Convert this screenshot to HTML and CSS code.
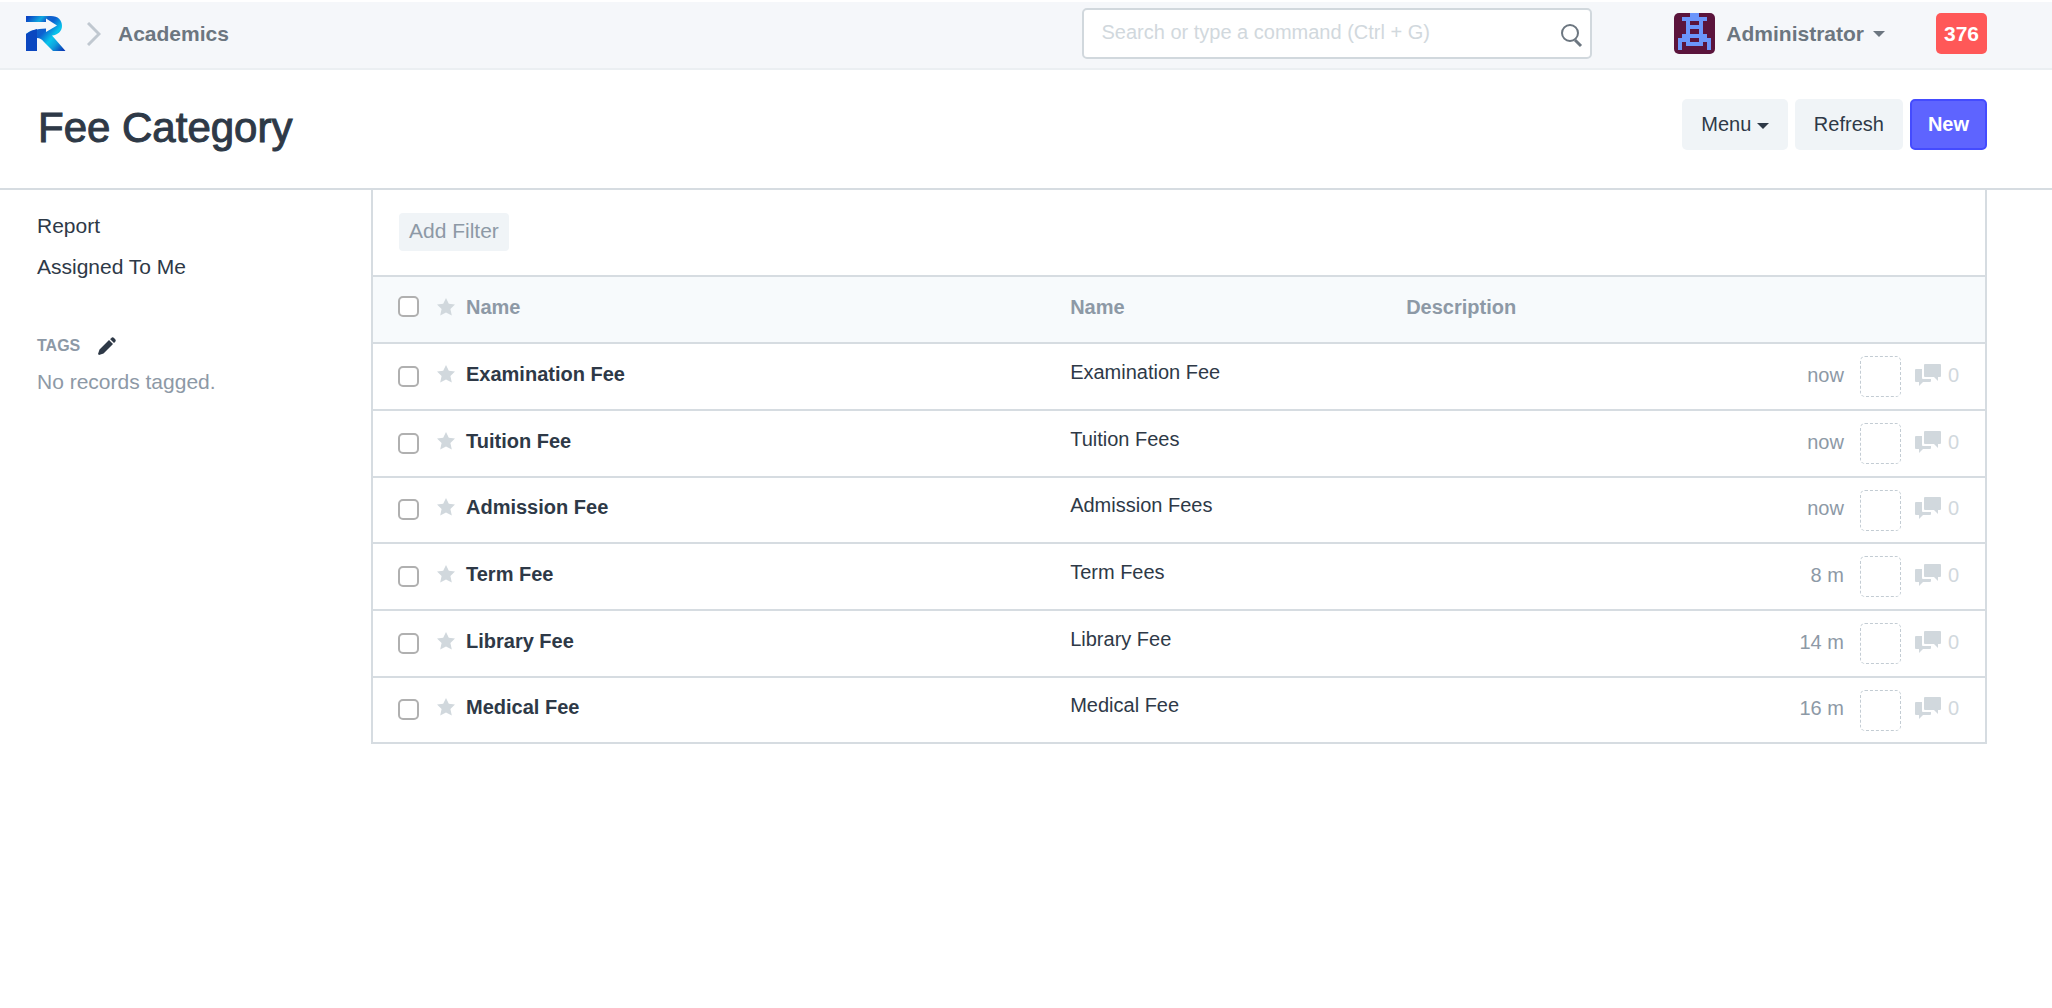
FILE: index.html
```html
<!DOCTYPE html>
<html lang="en">
<head>
<meta charset="utf-8">
<title>Fee Category</title>
<link rel="stylesheet" href="styles.css">
</head>
<body>
<svg class="sprite" aria-hidden="true">
  <symbol id="star" viewBox="0 0 18 18"><path d="M9 0l2.800 5.800 6.200.8-4.600 4.400 1.400 6.600L9 14.400l-5.800 3.200L4.600 11 0 6.600l6.200-.8z"/></symbol>
  <symbol id="chat" viewBox="0 0 26 22"><path d="M10 0h15q1 0 1 1v11q0 1-1 1h-2v4l-4-4h-9q-1 0-1-1V1q0-1 1-1z"/><path d="M1 5h6v9q0 1 1 1h8v2q0 1-1 1H8l-4 4v-4H1q-1 0-1-1V6q0-1 1-1z"/></symbol>
</svg>
<header class="navbar">
  <nav class="crumbs">
    <a href="#" aria-label="Home">
      <svg class="logo" viewBox="0 0 40 35">
        <defs><linearGradient id="blue" gradientUnits="userSpaceOnUse" x1="0" y1="4" x2="36" y2="35">
          <stop offset="0" stop-color="#0b45c4"/><stop offset=".22" stop-color="#0fa9e0"/><stop offset=".32" stop-color="#1262cc"/><stop offset=".44" stop-color="#0d5fd0"/><stop offset=".66" stop-color="#08c6ec"/><stop offset=".8" stop-color="#10a0dd"/><stop offset="1" stop-color="#0a3fb8"/>
        </linearGradient></defs>
        <path fill="url(#blue)" d="M0 0h25c7 0 11 4 11 10 0 5-4 9-10 9.500L39.500 35H27L18 26q-3-4-7-4V35H0V18q5-5 20-5.500v3.500l11-6.500L20 2.500V6H0z"/>
        <path fill="#0b47c0" d="M0 18q5-4 11-5v22H0z"/>
      </svg>
    </a>
    <svg class="chevron" viewBox="0 0 14 24"><path d="M1 1l11 11L1 23"/></svg>
    <a href="#">Academics</a>
  </nav>
  <div class="search">
    <input type="text" aria-label="Search" placeholder="Search or type a command (Ctrl + G)">
    <svg viewBox="0 0 22 24"><circle cx="9" cy="9" r="8"/><path class="handle" d="M14 16l6 6"/></svg>
  </div>
  <button class="user">
    <svg class="avatar" viewBox="0 0 10 10" shape-rendering="crispEdges"><path fill="#5b143c" d="M0 0h10v10H0z"/><path fill="#6b95fb" d="M4 0h2v1H4zM2 1h6v1H2zM3 2h1v4H3zM6 2h1v4H6zM4 3h2v1H4zM2 5h6v1H2zM1 6h3v1H1zM6 6h3v1H6zM1 7h1v2H1zM8 7h1v2H8zM3 7h4v1H3z"/></svg>
    Administrator <span class="caret"></span>
  </button>
  <button class="count">376</button>
</header>
<div class="head">
  <h1>Fee Category</h1>
  <div class="actions">
    <button class="btn">Menu <span class="caret"></span></button>
    <button class="btn">Refresh</button>
    <button class="btn primary">New</button>
  </div>
</div>
<div class="body">
  <aside class="side">
    <a href="#">Report</a>
    <a href="#">Assigned To Me</a>
    <div class="tags">TAGS
      <svg viewBox="0 0 18 18"><path d="M13 1.500Q14.500-.5 16 1l1 1q1.500 1.500 0 3l-1 1-4-4zM11 3l4 4-9.500 9.500L1 18l-1-1 1.500-4.500z"/></svg>
    </div>
    <p>No records tagged.</p>
  </aside>
  <main class="list">
    <div class="filters"><button>Add Filter</button></div>
    <table>
      <colgroup><col class="c-title"><col class="c-name"><col class="c-desc"><col></colgroup>
      <thead>
        <tr><th><div class="subject"><input type="checkbox" aria-label="Select all"><svg><use href="#star"/></svg>Name</div></th><th>Name</th><th>Description</th><th></th></tr>
      </thead>
      <tbody>
        <tr><td><div class="subject"><input type="checkbox" aria-label="Select Examination Fee"><svg><use href="#star"/></svg><a href="#">Examination Fee</a></div></td><td>Examination Fee</td><td></td><td><div class="meta">now<span class="assign"></span><svg><use href="#chat"/></svg><span class="zero">0</span></div></td></tr>
        <tr><td><div class="subject"><input type="checkbox" aria-label="Select Tuition Fee"><svg><use href="#star"/></svg><a href="#">Tuition Fee</a></div></td><td>Tuition Fees</td><td></td><td><div class="meta">now<span class="assign"></span><svg><use href="#chat"/></svg><span class="zero">0</span></div></td></tr>
        <tr><td><div class="subject"><input type="checkbox" aria-label="Select Admission Fee"><svg><use href="#star"/></svg><a href="#">Admission Fee</a></div></td><td>Admission Fees</td><td></td><td><div class="meta">now<span class="assign"></span><svg><use href="#chat"/></svg><span class="zero">0</span></div></td></tr>
        <tr><td><div class="subject"><input type="checkbox" aria-label="Select Term Fee"><svg><use href="#star"/></svg><a href="#">Term Fee</a></div></td><td>Term Fees</td><td></td><td><div class="meta">8 m<span class="assign"></span><svg><use href="#chat"/></svg><span class="zero">0</span></div></td></tr>
        <tr><td><div class="subject"><input type="checkbox" aria-label="Select Library Fee"><svg><use href="#star"/></svg><a href="#">Library Fee</a></div></td><td>Library Fee</td><td></td><td><div class="meta">14 m<span class="assign"></span><svg><use href="#chat"/></svg><span class="zero">0</span></div></td></tr>
        <tr><td><div class="subject"><input type="checkbox" aria-label="Select Medical Fee"><svg><use href="#star"/></svg><a href="#">Medical Fee</a></div></td><td>Medical Fee</td><td></td><td><div class="meta">16 m<span class="assign"></span><svg><use href="#chat"/></svg><span class="zero">0</span></div></td></tr>
      </tbody>
    </table>
  </main>
</div>
</body>
</html>
```
FILE: styles.css
```css
* { box-sizing: border-box; }
body { margin: 0; background: #fff; color: #2e3947; font: 20px/24px "Liberation Sans", Arial, sans-serif; }
a { color: inherit; text-decoration: none; }
button { border: 0; margin: 0; padding: 0; background: none; color: inherit; font: inherit; cursor: pointer; }
svg { display: block; flex: none; }
.sprite { display: none; }

.navbar { display: flex; align-items: center; margin-top: 2px; padding: 6px 65px 9px 26px; background: #f5f7fa; border-bottom: 2px solid #ebeff2; color: #6c7680; font-size: 21px; font-weight: bold; }
.crumbs { display: flex; align-items: center; flex: 1; }
.logo { width: 40px; height: 35px; }
.chevron { width: 14px; height: 24px; margin: 0 17px 0 21px; fill: none; stroke: #c0c8d0; stroke-width: 3; }
.search { position: relative; width: 26%; max-width: 513px; margin-right: 82px; }
.search input { width: 100%; height: 51px; padding: 0 50px 2px 17px; border: 2px solid #d1d8dd; border-radius: 5px; background: #fff; color: #36414c; font: 20px/24px "Liberation Sans", Arial, sans-serif; display: block; }
.search input::placeholder { color: #d1d8dd; opacity: 1; }
.search svg { position: absolute; right: 9px; top: 16px; width: 22px; height: 24px; fill: none; stroke: #6c7680; stroke-width: 2; }
.search .handle { stroke-width: 3; }
.user { display: flex; align-items: center; margin-right: 51px; font-weight: bold; }
.avatar { width: 41px; height: 41px; margin-right: 11px; border-radius: 5px; }
.caret { display: inline-block; border: 6px solid transparent; border-top-color: currentColor; border-bottom: 0; vertical-align: middle; }
.user .caret { margin-left: 9px; }
.count { width: 51px; height: 41px; border-radius: 5px; background: #ff5858; color: #fff; font-weight: bold; }

.head { display: flex; justify-content: space-between; align-items: center; padding: 28px 65px 38px 38px; border-bottom: 2px solid #d6dce1; }
h1 { margin: 8px 0 0; font-size: 42px; line-height: 44px; font-weight: normal; -webkit-text-stroke: 1px #2e3947; }
.actions { display: flex; gap: 7px; }
.btn { height: 51px; padding: 0 19px; border-radius: 5px; background: #f0f4f7; }
.btn.primary { padding: 0 16px; border: 2px solid #444bff; background: #5e64ff; color: #fff; font-weight: bold; }

.body { display: flex; padding-right: 65px; }
.side { display: flex; flex-direction: column; align-items: flex-start; gap: 17px; width: 371px; flex: none; padding: 24px 20px 0 37px; font-size: 21px; }
.tags { display: flex; align-items: center; gap: 18px; margin-top: 38px; color: #8d99a6; font-size: 16px; font-weight: bold; }
.tags svg { width: 18px; height: 18px; fill: #2e3947; }
.side p { margin: -5px 0 0; color: #8d99a6; }

.list { flex: 1; border: 2px solid #d6dce1; border-width: 0 2px; }
.filters { padding: 23px 26px 24px; border-bottom: 2px solid #d6dce1; }
.filters button { display: block; height: 38px; padding: 0 10px 2px; border-radius: 4px; background: #f0f4f7; color: #8d99a6; font-size: 21px; }
table { width: 100%; table-layout: fixed; border-spacing: 0; }
.c-title { width: 43%; }
.c-name { width: 336px; }
.c-desc { width: 18%; }
th, td { height: 67px; padding: 0 0 10px 4px; border-bottom: 2px solid #d6dce1; text-align: left; }
tbody tr:nth-child(3n) td { height: 66px; }
th { padding-bottom: 6px; background: #f7fafc; color: #8d99a6; }
td:first-child { padding: 0 0 6px 25px; }
th:first-child { padding: 0 0 6px 25px; }
td:last-child { padding: 0 26px 4px 0; }
.subject { display: flex; align-items: center; font-weight: bold; }
.subject input { appearance: none; flex: none; width: 21px; height: 21px; margin: 0 18px 0 0; border: 2px solid #b0b0b0; border-radius: 5px; background: #fff; }
.subject svg { width: 18px; height: 18px; margin-right: 11px; fill: #d1d8dd; }
td .subject input { margin-top: 5px; }
.meta { display: flex; align-items: center; justify-content: flex-end; color: #8d99a6; }
.assign { width: 41px; height: 41px; margin: 4px 14px 0 16px; border: 1px dashed #c3ccd3; border-radius: 5px; }
.meta svg { width: 26px; height: 22px; margin-right: 7px; fill: #d1d8dd; }
.zero { color: #d1d8dd; }
```
